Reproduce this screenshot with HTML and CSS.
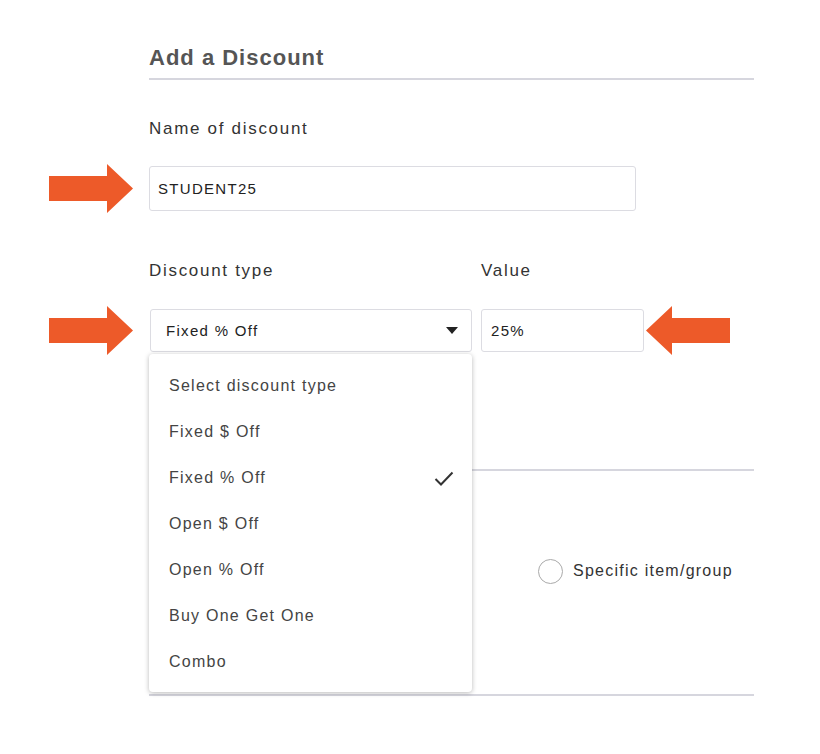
FILE: index.html
```html
<!DOCTYPE html>
<html>
<head>
<meta charset="utf-8">
<link rel="stylesheet" href="styles.css">
</head>
<body>
<div class="page">
  <h2 class="title">Add a Discount</h2>
  <div class="label name-label">Name of discount</div>
  <div class="row row-name">
    <svg class="arrow" width="84" height="49" viewBox="0 0 84 49"><polygon points="0,12 58,12 58,0 84,24.5 58,49 58,37 0,37" fill="#ED5A29"/></svg>
    <div class="input name-input">STUDENT25</div>
  </div>
  <div class="labels">
    <span class="label type-label">Discount type</span>
    <span class="label">Value</span>
  </div>
  <div class="row row-type">
    <svg class="arrow" width="84" height="49" viewBox="0 0 84 49"><polygon points="0,12 58,12 58,0 84,24.5 58,49 58,37 0,37" fill="#ED5A29"/></svg>
    <div class="select-wrap">
      <div class="select">
        <span>Fixed % Off</span>
        <svg class="caret" width="12" height="7" viewBox="0 0 12 7"><polygon points="0,0 12,0 6,7" fill="#222"/></svg>
      </div>
      <ul class="menu">
        <li>Select discount type</li>
        <li>Fixed $ Off</li>
        <li class="checked">Fixed % Off
          <svg class="check" width="20" height="15" viewBox="0 0 20 15"><polyline points="1.5,8 7,13.5 18.5,1.5" fill="none" stroke="#333" stroke-width="2"/></svg>
        </li>
        <li>Open $ Off</li>
        <li>Open % Off</li>
        <li>Buy One Get One</li>
        <li>Combo</li>
      </ul>
    </div>
    <div class="input value-input">25%</div>
    <svg class="arrow arrow-left" width="84" height="49" viewBox="0 0 84 49"><polygon points="84,12 26,12 26,0 0,24.5 26,49 26,37 84,37" fill="#ED5A29"/></svg>
  </div>
  <div class="divider mid"></div>
  <div class="radio-row">
    <span class="radio"></span>
    <span class="radio-label">Specific item/group</span>
  </div>
  <div class="divider bottom"></div>
</div>
</body>
</html>
```

FILE: styles.css
```css
* { box-sizing: border-box; }
html, body { margin: 0; padding: 0; background: #fff; }
body { font-family: "Liberation Sans", Arial, sans-serif; color: #333; }

.page {
  width: 820px;
  height: 754px;
  padding: 44px 0 0 49px;
}

.title {
  margin: 0 0 0 100px;
  width: 605px;
  font-size: 22px;
  line-height: 28px;
  font-weight: 700;
  letter-spacing: 1px;
  color: #555;
  padding-bottom: 6px;
  border-bottom: 2px solid #d6d6de;
}

.label {
  font-size: 17px;
  line-height: 22px;
  color: #333;
  letter-spacing: 1.7px;
}

.name-label {
  margin: 38px 0 0 100px;
}

.row {
  display: flex;
  align-items: center;
}
.row-name { margin-top: 24px; }

.arrow { flex: none; display: block; }

.input {
  height: 45px;
  border: 1px solid #dcdce2;
  border-radius: 3px;
  font-size: 15px;
  letter-spacing: 1.3px;
  color: #222;
  display: flex;
  align-items: center;
  padding-left: 8px;
}
.name-input { width: 487px; margin-left: 16px; }

.labels {
  display: flex;
  margin: 47px 0 0 100px;
}
.type-label { width: 332px; }

.row-type { margin-top: 24px; }

.select-wrap {
  position: relative;
  margin-left: 16px;
  width: 323px;
}
.select {
  height: 43px;
  margin-left: 1px;
  border: 1px solid #dcdce2;
  border-radius: 3px;
  display: flex;
  align-items: center;
  justify-content: space-between;
  padding: 0 13px 0 15px;
  font-size: 15px;
  letter-spacing: 1.3px;
  color: #222;
}
.caret { display: block; }

.menu {
  position: absolute;
  left: 0;
  top: 45px;
  width: 323px;
  margin: 0;
  padding: 9px 0 7px;
  list-style: none;
  background: #fff;
  border-radius: 4px;
  box-shadow: 0 1px 5px rgba(0,0,0,0.28);
  z-index: 2;
}
.menu li {
  height: 46px;
  display: flex;
  align-items: center;
  justify-content: space-between;
  padding: 0 18px 0 20px;
  font-size: 16px;
  letter-spacing: 1.25px;
  color: #444;
}
.check { display: block; }

.value-input {
  width: 163px;
  height: 43px;
  margin-left: 9px;
  padding-left: 9px;
}
.arrow-left { margin-left: 2px; }

.divider {
  margin-left: 100px;
  width: 605px;
  height: 2px;
  background: #d6d6de;
}
.divider.mid { margin-top: 114px; }

.radio-row {
  display: flex;
  align-items: center;
  margin: 87px 0 0 489px;
  height: 26px;
}
.radio {
  width: 25px;
  height: 25px;
  border: 1.5px solid #aaa;
  border-radius: 50%;
  margin-right: 10px;
}
.radio-label {
  font-size: 16px;
  color: #333;
  letter-spacing: 1.25px;
}

.divider.bottom { margin-top: 110px; }
```
